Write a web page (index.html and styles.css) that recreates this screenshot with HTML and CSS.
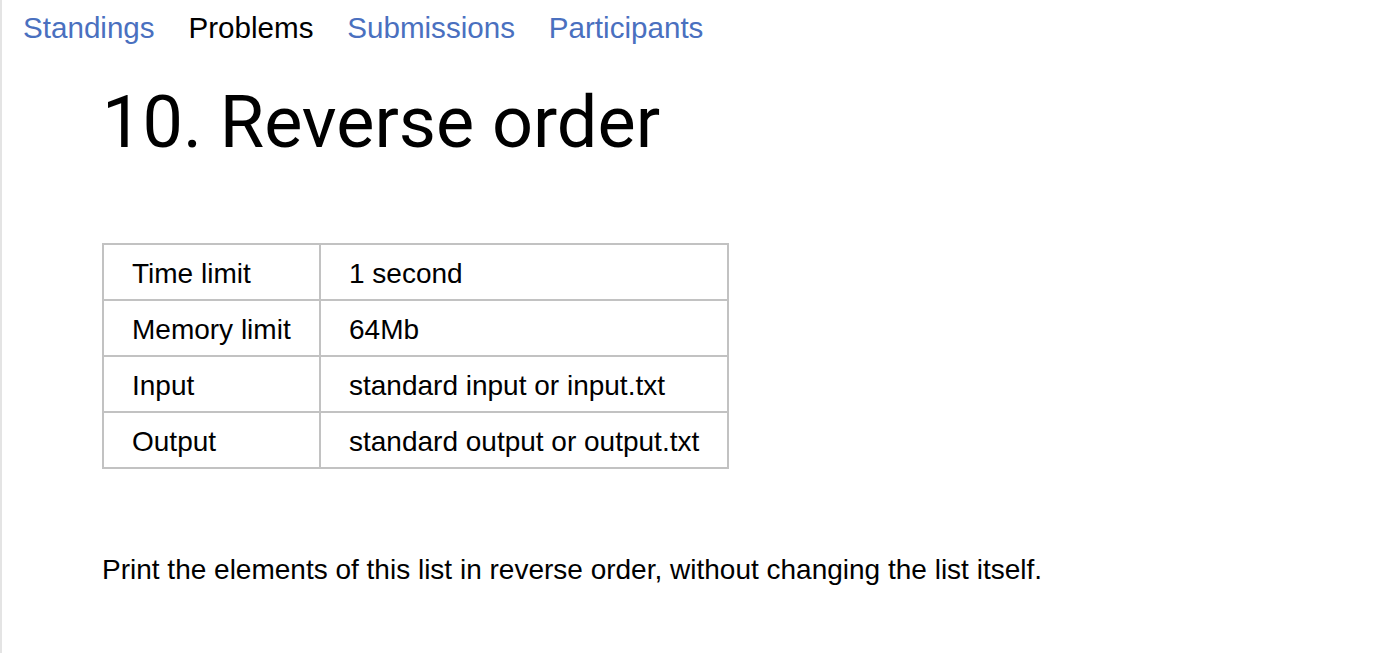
FILE: index.html
```html
<!DOCTYPE html>
<html lang="en">
<head>
<meta charset="utf-8">
<title>10. Reverse order</title>
<link rel="stylesheet" href="styles.css">
</head>
<body>
<div class="page">
  <nav class="nav">
    <a class="nav-link" href="#">Standings</a>
    <span class="nav-link nav-current">Problems</span>
    <a class="nav-link" href="#">Submissions</a>
    <a class="nav-link" href="#">Participants</a>
  </nav>
  <main class="content">
    <h1 class="title">10. Reverse order</h1>
    <table class="limits">
      <tr><td class="lbl">Time limit</td><td class="val">1 second</td></tr>
      <tr><td class="lbl">Memory limit</td><td class="val">64Mb</td></tr>
      <tr><td class="lbl">Input</td><td class="val">standard input or input.txt</td></tr>
      <tr><td class="lbl">Output</td><td class="val">standard output or output.txt</td></tr>
    </table>
    <p class="statement">Print the elements of this list in reverse order, without changing the list itself.</p>
  </main>
</div>
</body>
</html>
```
FILE: styles.css
```css
html, body {
  margin: 0;
  padding: 0;
  background: #ffffff;
}

body {
  font-family: "Liberation Sans", Arial, sans-serif;
  color: #000000;
}

.page {
  min-height: 653px;
  border-left: 2px solid #e4e4e4;
  box-sizing: border-box;
}

.nav {
  display: flex;
  gap: 33.8px;
  padding: 11px 0 0 21px;
  font-size: 29.6px;
  line-height: 34px;
}

.nav-link {
  color: #4a70bf;
  text-decoration: none;
}

.nav-current {
  color: #000000;
}

.content {
  padding-left: 100px;
}

.title {
  margin: 35px 0 0 0;
  font-family: Roboto, "Liberation Sans", sans-serif;
  font-weight: 400;
  font-size: 72px;
  line-height: 86px;
}

.limits {
  margin-top: 77px;
  border-collapse: collapse;
  width: 627px;
  font-size: 28px;
  line-height: 32px;
}

.limits td {
  border: 2px solid #c2c2c2;
  padding: 13px 0 9px 28px;
}

.limits .lbl {
  width: 187px;
}

.statement {
  margin: 85px 0 0 0;
  font-size: 28px;
  line-height: 32px;
}
```
